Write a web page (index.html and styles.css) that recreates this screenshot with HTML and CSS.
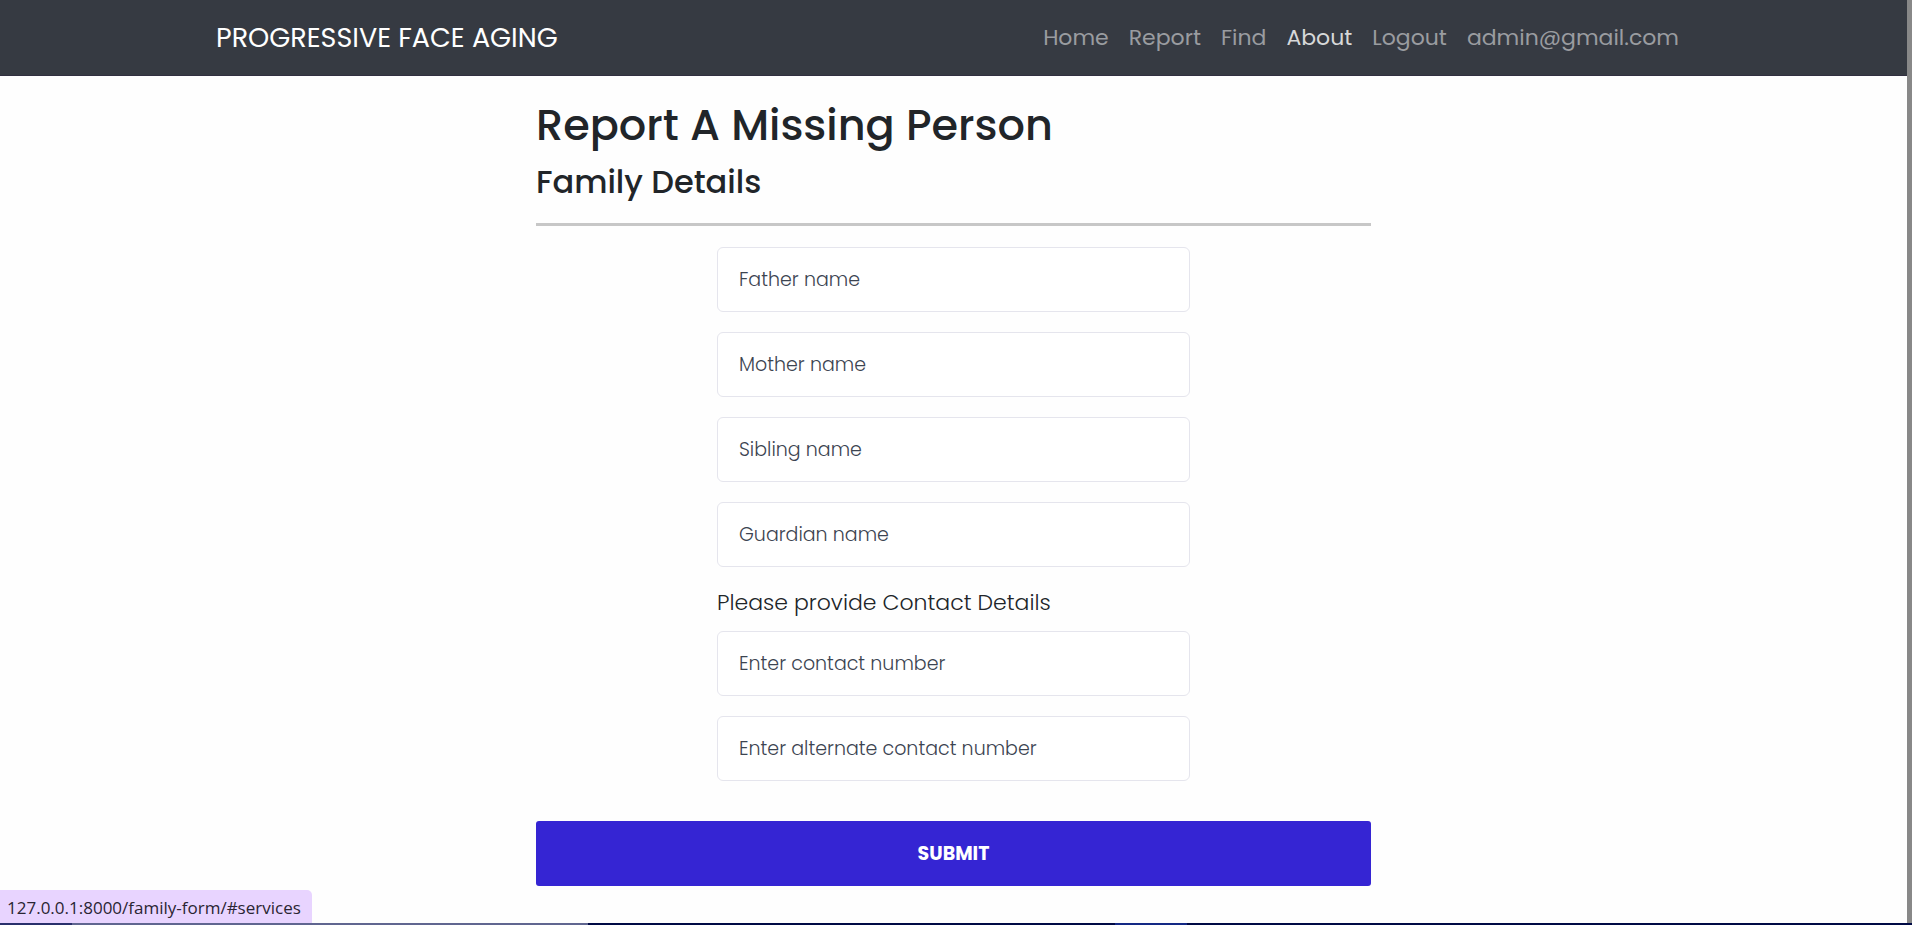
FILE: index.html
```html
<!DOCTYPE html>
<html lang="en">
<head>
<meta charset="utf-8">
<meta name="viewport" content="width=device-width, initial-scale=1">
<title>Report A Missing Person</title>
<link rel="stylesheet" href="styles.css">
</head>
<body>
<div class="page">
  <header class="navbar">
    <div class="navbar-inner">
      <a class="brand" href="#">PROGRESSIVE FACE AGING</a>
      <nav class="nav-links">
        <a class="nav-link" href="#home">Home</a>
        <a class="nav-link" href="#report">Report</a>
        <a class="nav-link" href="#find">Find</a>
        <a class="nav-link nav-link-current" href="#services">About</a>
        <a class="nav-link" href="#logout">Logout</a>
        <a class="nav-link" href="#account">admin@gmail.com</a>
      </nav>
    </div>
  </header>
  <main class="content">
    <h1 class="title">Report A Missing Person</h1>
    <h2 class="subtitle">Family Details</h2>
    <hr class="rule">
    <form class="form">
      <div class="fields">
        <input class="field" type="text" placeholder="Father name" aria-label="Father name">
        <input class="field" type="text" placeholder="Mother name" aria-label="Mother name">
        <input class="field" type="text" placeholder="Sibling name" aria-label="Sibling name">
        <input class="field" type="text" placeholder="Guardian name" aria-label="Guardian name">
      </div>
      <p class="section-label">Please provide Contact Details</p>
      <div class="fields">
        <input class="field" type="tel" placeholder="Enter contact number" aria-label="Contact number">
        <input class="field" type="tel" placeholder="Enter alternate contact number" aria-label="Alternate contact number">
      </div>
      <button class="submit" type="submit">SUBMIT</button>
    </form>
  </main>
</div>
<div class="scroll-thumb"></div>
<div class="link-status">127.0.0.1:8000/family-form/#services</div>
<div class="taskbar"></div>
</body>
</html>
```

FILE: styles.css
```css
* {
  box-sizing: border-box;
}

body {
  margin: 0;
  background: #fefefe;
  color: #212529;
  font-family: Poppins, Inter, sans-serif;
  font-size: 18px;
}

.page {
  min-height: 100vh;
  padding-right: 5px;
}

.navbar {
  background: #363a42;
  border-bottom: 1px solid #312f40;
}

.navbar-inner {
  display: flex;
  align-items: center;
  justify-content: space-between;
  max-width: 1475px;
  height: 75px;
  margin: 0 auto;
  padding-right: 12px;
}

.brand {
  color: #fff;
  font-size: 27px;
  text-decoration: none;
}

.nav-links {
  display: flex;
  gap: 20px;
}

.nav-link {
  color: #9a9ca0;
  font-size: 22px;
  text-decoration: none;
}

.nav-link-current {
  color: #d7d8d9;
}

.content {
  max-width: 835px;
  margin: 0 auto;
  padding: 22px 0 38px;
}

.title,
.subtitle {
  margin: 0 0 8px;
  font-weight: 500;
}

.title {
  font-size: 43px;
  line-height: 54px;
}

.subtitle {
  font-size: 32px;
  line-height: 44px;
}

.rule {
  height: 3px;
  margin: 19px 0 21px;
  border: 0;
  background: #c7c7c7;
}

.form {
  display: flex;
  flex-direction: column;
  align-items: center;
}

.fields {
  display: flex;
  flex-direction: column;
  gap: 20px;
  width: 100%;
  max-width: 473px;
}

.field {
  width: 100%;
  height: 65px;
  padding: 0 21px;
  border: 1px solid #e5e5ed;
  border-radius: 6px;
  background: #fff;
  color: #495057;
  font: 300 19px Poppins, Inter, sans-serif;
}

.field::placeholder {
  color: #3c4451;
  opacity: 1;
}

.section-label {
  width: 100%;
  max-width: 473px;
  margin: 20px 0 12px;
  font-size: 22px;
  line-height: 32px;
  font-weight: 300;
}

.submit {
  width: 100%;
  height: 65px;
  margin-top: 40px;
  border: 0;
  border-radius: 3px;
  background: #3525d3;
  color: #fff;
  font: 700 19px Poppins, Inter, sans-serif;
}

.scroll-thumb {
  position: fixed;
  top: 0;
  right: 0;
  bottom: 0;
  width: 5px;
  background: #888;
}

.link-status {
  position: fixed;
  left: 0;
  bottom: 2px;
  height: 33px;
  padding: 0 11px 0 7px;
  border-top-right-radius: 5px;
  background: #e8d4ff;
  color: #2a2533;
  font-family: "Segoe UI", "Open Sans", sans-serif;
  font-size: 17px;
  line-height: 35px;
}

.taskbar {
  position: fixed;
  right: 0;
  bottom: 0;
  left: 0;
  height: 2px;
  background: linear-gradient(to right, #29306c 72px, #606690 72px 588px, #000a45 588px 1115px, #142985 1115px 1187px, #000a45 1187px);
}
```
